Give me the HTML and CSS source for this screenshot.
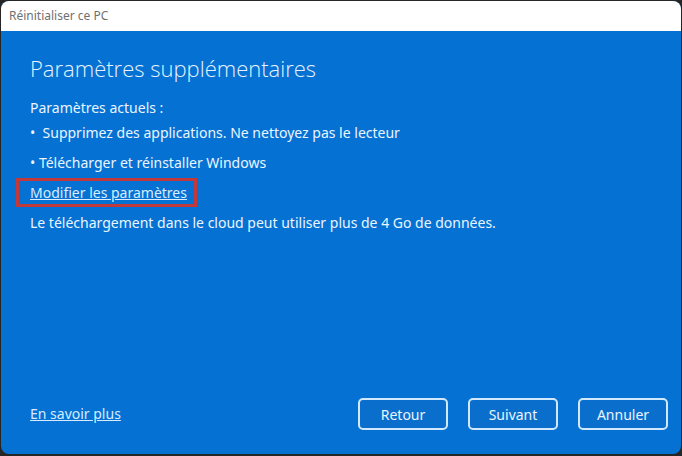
FILE: index.html
```html
<!DOCTYPE html>
<html>
<head>
    <title>Réinitialiser ce PC</title>
    <link rel="stylesheet" href="styles.css">
</head>
<body>
    <div class="window">
        <div class="titlebar">Réinitialiser ce PC</div>
        <div class="content">
            <h1 class="heading">Paramètres supplémentaires</h1>
            <p class="line first">Paramètres actuels :</p>
            <p class="line">•&nbsp; Supprimez des applications. Ne nettoyez pas le lecteur</p>
            <p class="line">• Télécharger et réinstaller Windows</p>
            <p class="line"><span class="boxed"><a class="link" href="#">Modifier les paramètres</a></span></p>
            <p class="line">Le téléchargement dans le cloud peut utiliser plus de 4 Go de données.</p>

            <div class="footer">
                <a class="link more" href="#">En savoir plus</a>
                <div class="buttons">
                    <button class="btn">Retour</button>
                    <button class="btn">Suivant</button>
                    <button class="btn">Annuler</button>
                </div>
            </div>
        </div>
    </div>
</body>
</html>
```

FILE: styles.css
```css
html, body {
    margin: 0;
    height: 100%;
}

body {
    background-color: #262626;
    font-family: "Noto Sans", "Open Sans", sans-serif;
    padding: 1px 1px 2px 1px;
    box-sizing: border-box;
}

.window {
    height: 100%;
    border-radius: 8px;
    overflow: hidden;
    display: flex;
    flex-direction: column;
    background-color: #0571d3;
}

.titlebar {
    height: 30px;
    background-color: #ffffff;
    color: #707070;
    font-size: 12px;
    padding-left: 8px;
    line-height: 30px;
    flex-shrink: 0;
}

.content {
    flex: 1;
    display: flex;
    flex-direction: column;
    padding: 0 13px 0 29px;
    color: #eaf5ff;
}

.heading {
    font-family: "Open Sans", sans-serif;
    font-weight: 300;
    font-size: 22px;
    margin: 21px 0 0 0;
    line-height: 32px;
    color: #e6f3ff;
}

.line {
    font-size: 14px;
    margin: 0;
    height: 30px;
    line-height: 30px;
}

.line.first {
    margin-top: 14px;
    height: 20px;
    line-height: 20px;
}

.link {
    color: #d7ecff;
    text-decoration: underline;
    font-size: 14px;
}

/* red highlight round the link */
.boxed {
    display: inline-block;
    margin-left: -14px;
    padding: 0 7px 0 11px;
    border: 3px solid #c2393b;
    line-height: 23px;
}

.footer {
    margin-top: auto;
    height: 56px;
    display: flex;
    align-items: flex-start;
    justify-content: space-between;
}

.more {
    margin-top: 6px;
}

.buttons {
    display: flex;
    gap: 20px;
}

.btn {
    width: 90px;
    height: 32px;
    background-color: #0a6fcc;
    border: 2px solid #d2e9fd;
    border-radius: 5px;
    color: #eaf5ff;
    font-family: "Noto Sans", sans-serif;
    font-size: 14px;
}
```
